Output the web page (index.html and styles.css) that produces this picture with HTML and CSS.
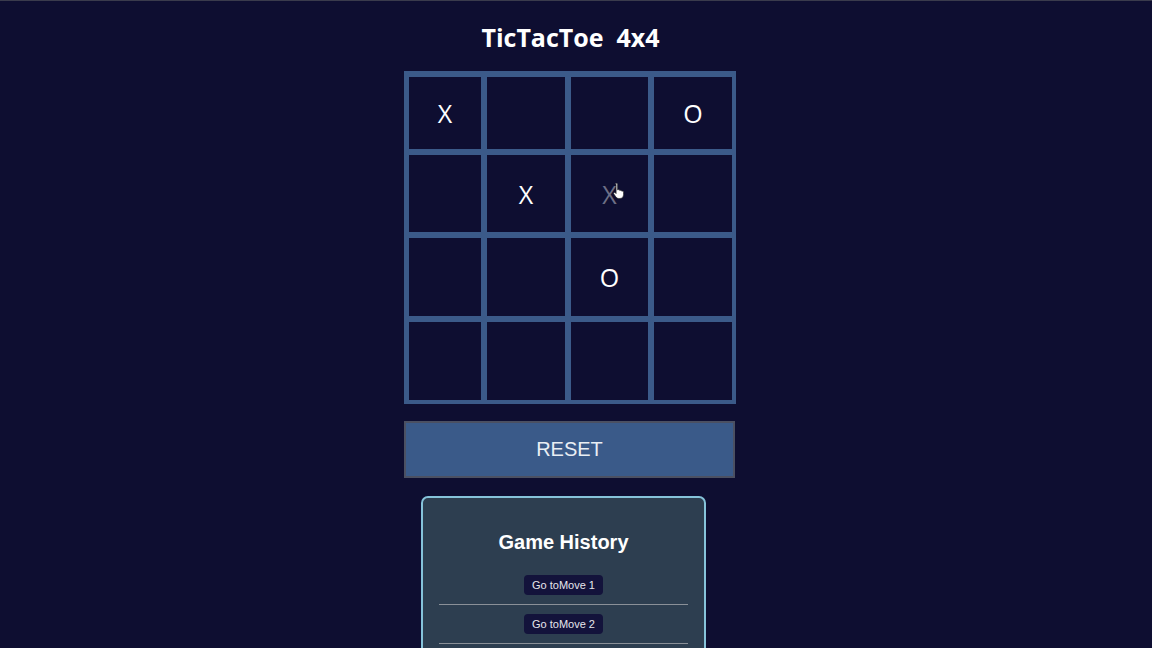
FILE: index.html
```html
<!DOCTYPE html>
<html lang="en">
<head>
<meta charset="utf-8">
<title>TicTacToe 4x4</title>
<link rel="stylesheet" href="styles.css">
</head>
<body>
<main class="app">
  <h1 class="title">TicTacToe&nbsp; 4x4</h1>
  <div class="board">
    <div class="cell">X</div>
    <div class="cell"></div>
    <div class="cell"></div>
    <div class="cell">O</div>
    <div class="cell"></div>
    <div class="cell">X</div>
    <div class="cell cell-hover">X
      <svg class="cursor" width="13" height="17" viewBox="0 0 12 16" aria-hidden="true">
        <path d="M3 1.2c.7 0 1.2.5 1.2 1.2v5l.6-.2c.6-.2 1.2.1 1.3.6l.1.2.5-.2c.6-.2 1.2.1 1.3.6l.1.2.4-.1c.7-.1 1.3.4 1.3 1.1v2.3c0 2-1.4 3.6-3.4 3.6H5.2c-1 0-1.9-.5-2.5-1.3L.7 11.4c-.4-.6-.2-1.3.4-1.5.5-.2 1 0 1.3.4l.4.6V2.4C1.8 1.7 2.3 1.2 3 1.2z" fill="#ffffff" stroke="#222" stroke-width="0.6"/>
      </svg>
    </div>
    <div class="cell"></div>
    <div class="cell"></div>
    <div class="cell"></div>
    <div class="cell">O</div>
    <div class="cell"></div>
    <div class="cell"></div>
    <div class="cell"></div>
    <div class="cell"></div>
    <div class="cell"></div>
  </div>
  <button class="reset">RESET</button>
  <section class="history">
    <h3 class="history-title">Game History</h3>
    <ul class="moves">
      <li class="move"><button class="move-btn">Go toMove 1</button></li>
      <li class="move"><button class="move-btn">Go toMove 2</button></li>
    </ul>
  </section>
</main>
</body>
</html>
```

FILE: styles.css
```css
html, body {
  margin: 0;
  padding: 0;
}

body {
  background: #0e0e31;
  border-top: 1px solid #3a3b4c;
  height: 647px;
  overflow: hidden;
  font-family: "Open Sans", "Liberation Sans", sans-serif;
  color: #ffffff;
}

.app {
  display: flex;
  flex-direction: column;
  align-items: center;
  padding-right: 12px;
}

.title {
  margin: 19px 0 0;
  height: 35px;
  line-height: 35px;
  font-size: 25px;
  font-weight: 700;
  color: #ffffff;
  padding-left: 1px;
}

.board {
  margin-top: 16px;
  display: grid;
  grid-template-columns: 72px 78px 77px 78px;
  grid-template-rows: 72px 77px 78px 78px;
  gap: 6px 6px;
  padding: 6px 5px 5px 5px;
  background: #3b5a89;
  width: 332px;
  height: 333px;
  box-sizing: border-box;
}

.cell {
  position: relative;
  background: #0e0e31;
  display: flex;
  align-items: center;
  justify-content: center;
  font-size: 25px;
  color: #ffffff;
}

.cell-hover {
  color: #6d6f86;
}

.cursor {
  position: absolute;
  left: 42px;
  top: 27px;
}

.reset {
  margin-top: 17px;
  width: 331px;
  height: 57px;
  background: #3a5a89;
  border: 2px solid #4b5062;
  color: #e9eef4;
  font-family: "Liberation Sans", Arial, sans-serif;
  font-size: 20px;
  cursor: pointer;
  margin-left: -1px;
}

.history {
  margin-top: 18px;
  margin-right: 13px;
  width: 285px;
  box-sizing: border-box;
  border: 2px solid #86c3da;
  border-radius: 7px;
  background: #2d3e50;
  padding: 32px 16px 40px;
  font-family: "Liberation Sans", Arial, sans-serif;
}

.history-title {
  margin: 0;
  text-align: center;
  font-size: 20px;
  line-height: 24px;
  font-weight: 700;
  color: #ffffff;
}

.moves {
  list-style: none;
  margin: 12px 0 0;
  padding: 0;
}

.move {
  display: flex;
  justify-content: center;
  padding: 9px 0 9px;
  border-bottom: 1px solid #8a9098;
}

.move-btn {
  height: 20px;
  padding: 0 8px;
  background: #13133b;
  color: #e6e6ec;
  border: none;
  border-radius: 4px;
  font-family: "Liberation Sans", Arial, sans-serif;
  font-size: 11px;
  line-height: 20px;
}
```
